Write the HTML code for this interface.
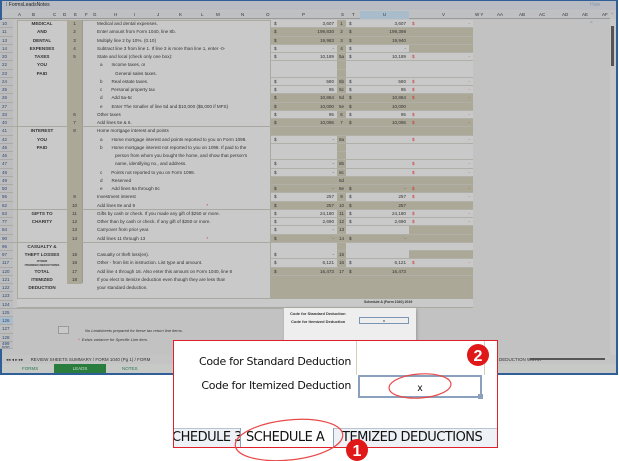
<!DOCTYPE html>
<html><head><meta charset="utf-8"><style>
*{margin:0;padding:0;box-sizing:border-box}
body{width:619px;height:461px;background:#fff;font-family:"Liberation Sans",sans-serif;position:relative;overflow:hidden}
.a{position:absolute}
.win{left:0;top:0;width:618px;height:375px;background:#c2c2c2;border:2px solid #2f5f96;border-top-width:1px}
.r{position:absolute;left:0;width:473px;height:8.25px;font-size:4.6px;color:#333;line-height:8.25px}
.r>div{position:absolute;top:0;height:8.25px;white-space:nowrap;overflow:hidden}
.n{left:0;width:13px;color:#2a4b7a;font-size:4.5px;padding-left:2px;background:#bdbdbd;border-bottom:1px solid #aaa}
.b{left:17px;width:50px;text-align:center;font-weight:bold}
.e{left:67px;width:15px;text-align:center;background:#aba898}
.h{left:97px}
.p{left:271px;width:66px;border-bottom:1px solid #b0b0a8;padding:0 3px;text-align:right}
.s{left:337px;width:9px;background:#aba898;text-align:center;border-bottom:1px solid #b0b0a8}
.u{left:346px;width:63px;padding:0 3px;text-align:right;border-bottom:1px solid #b0b0a8}
.v{left:409px;width:64px;padding:0 3px;border-bottom:1px solid #b0b0a8}
.w{background:#c9c9c9}.t{background:#aba898}
.d{float:left;color:#333}.rd{color:#c33}
.tab{font-size:4.5px;color:#333}
</style></head><body>
<div class="a win"></div>
<div class="a" style="left:2px;top:1px;width:614px;height:9px;background:#b9bcc2;font-size:5px;line-height:9px;padding-left:4px;color:#222">⁞ FormsLeadsNotes<span style="position:absolute;left:588px;color:#8895b0">Hide Changes ▪ ×</span></div>
<div class="a" style="left:2px;top:11px;width:608px;height:8px;background:#bfc0c2;border-bottom:1px solid #999;font-size:4.5px;line-height:8px;color:#333">
<span class="a" style="left:16px">A</span><span class="a" style="left:30px">B</span><span class="a" style="left:51px">C</span><span class="a" style="left:61px">D</span><span class="a" style="left:72px">E</span><span class="a" style="left:83px">F</span><span class="a" style="left:91px">G</span><span class="a" style="left:112px">H</span><span class="a" style="left:132px">I</span><span class="a" style="left:155px">J</span><span class="a" style="left:177px">K</span><span class="a" style="left:199px">L</span><span class="a" style="left:214px">M</span><span class="a" style="left:239px">N</span><span class="a" style="left:264px">O</span><span class="a" style="left:300px">P</span><span class="a" style="left:339px">S</span><span class="a" style="left:350px">T</span><span class="a" style="left:358px;width:49px;height:8px;background:#a9bccb;text-align:center">U</span><span class="a" style="left:440px">V</span><span class="a" style="left:473px">W Y</span><span class="a" style="left:495px">AA</span><span class="a" style="left:517px">AB</span><span class="a" style="left:537px">AC</span><span class="a" style="left:560px">AD</span><span class="a" style="left:580px">AE</span><span class="a" style="left:600px">AF</span></div>
<div class="a" style="left:610px;top:19px;width:6px;height:337px;background:#c8c8c8"></div>
<div class="a" style="left:611px;top:26px;width:3px;height:40px;background:#555"></div>
<!-- form box -->
<div class="a" style="left:17px;top:20px;width:254px;height:288px;background:#c9c9c9;border:1px solid #a9a9a0"></div>
<div class="a" style="left:271px;top:20px;width:202px;height:288px;background:#aba898"></div>
<div class="a" style="left:67px;top:20px;width:15px;height:263px;background:#aba898"></div>
<div class="a" style="left:82px;top:20px;width:1px;height:263px;background:#999"></div>
<div class="a" style="left:17px;top:298px;width:456px;height:10px;background:#c9c9c9;border-top:1px solid #a9a9a0;border-bottom:1px solid #a9a9a0"></div>
<div class="a" style="left:364px;top:300px;font-size:3.5px;font-weight:bold;color:#333">Schedule A (Form 1040) 2019</div>
<div class="a" style="left:13px;top:308px;width:270px;height:0;border-top:1px solid #aaa"></div>
<div class="a" style="left:58px;top:326px;width:11px;height:8px;border:1px solid #999;background:#c9c9c9"></div>
<div class="a" style="left:85px;top:328px;font-size:4px;font-style:italic;color:#333">No Leadsheets prepared for these tax return line items.</div>
<div class="a" style="left:78px;top:337px;font-size:4px;font-style:italic;color:#333"><span class="rd">*</span>&nbsp; Exists variance for Specific Line item.</div>
<!-- rows -->
<div class="r" style="top:20px"><div class="n">10</div><div class="b">MEDICAL</div><div class="e">1</div><div class="h">Medical and dental expenses.</div><div class="p w"><span class="d">$</span>3,607</div><div class="s">1</div><div class="u w"><span class="d">$</span>3,607</div><div class="v w"><span class="rd">$</span><span style="float:right" class="rd">-</span></div></div>
<div class="r" style="top:28.25px"><div class="n">11</div><div class="b">AND</div><div class="e">2</div><div class="h">Enter amount from Form 1040, line 8b.</div><div class="p t"><span class="d">$</span>199,830</div><div class="s">2</div><div class="u t"><span class="d">$</span>199,398</div><div class="v t"></div></div>
<div class="r" style="top:36.5px"><div class="n">13</div><div class="b">DENTAL</div><div class="e">3</div><div class="h">Multiply line 2 by 10%. (0.10)</div><div class="p t"><span class="d">$</span>19,983</div><div class="s">3</div><div class="u t"><span class="d">$</span>19,940</div><div class="v t"></div></div>
<div class="r" style="top:44.75px"><div class="n">14</div><div class="b">EXPENSES</div><div class="e">4</div><div class="h">Subtract line 3 from line 1. If line 3 is more than line 1, enter -0-</div><div class="p w"><span class="d">$</span>-</div><div class="s">4</div><div class="u w"><span class="d">$</span>-</div><div class="v t"></div></div>
<div class="r" style="top:53px"><div class="n">20</div><div class="b">TAXES</div><div class="e">5</div><div class="h">State and local (check only one box):</div><div class="p w"><span class="d">$</span>10,189</div><div class="s">5a</div><div class="u w"><span class="d">$</span>10,189</div><div class="v w"><span class="rd">$</span><span style="float:right" class="rd">-</span></div></div>
<div class="r" style="top:61.25px"><div class="n">22</div><div class="b">YOU</div><div class="e"></div><div class="h" style="left:100px">a &nbsp;&nbsp;&nbsp;&nbsp;&nbsp;&nbsp;Income taxes, or</div><div class="p w" style="border:0"></div><div class="s"></div><div class="u w" style="border:0"></div><div class="v w" style="border:0"></div></div>
<div class="r" style="top:69.5px"><div class="n">23</div><div class="b">PAID</div><div class="e"></div><div class="h" style="left:115px">General sales taxes.</div><div class="p w"></div><div class="s"></div><div class="u w"></div><div class="v w"></div></div>
<div class="r" style="top:77.75px"><div class="n">24</div><div class="e"></div><div class="h" style="left:100px">b &nbsp;&nbsp;&nbsp;&nbsp;&nbsp;&nbsp;Real estate taxes.</div><div class="p w"><span class="d">$</span>580</div><div class="s">5b</div><div class="u w"><span class="d">$</span>580</div><div class="v w"><span class="rd">$</span><span style="float:right" class="rd">-</span></div></div>
<div class="r" style="top:86px"><div class="n">25</div><div class="e"></div><div class="h" style="left:100px">c &nbsp;&nbsp;&nbsp;&nbsp;&nbsp;&nbsp;Personal property tax</div><div class="p w"><span class="d">$</span>95</div><div class="s">5c</div><div class="u w"><span class="d">$</span>95</div><div class="v w"><span class="rd">$</span><span style="float:right" class="rd">-</span></div></div>
<div class="r" style="top:94.25px"><div class="n">26</div><div class="e"></div><div class="h" style="left:100px">d &nbsp;&nbsp;&nbsp;&nbsp;&nbsp;&nbsp;Add 5a-5c</div><div class="p t"><span class="d">$</span>10,864</div><div class="s">5d</div><div class="u t"><span class="d">$</span>10,864</div><div class="v t"><span class="rd">$</span><span style="float:right" class="rd">-</span></div></div>
<div class="r" style="top:102.5px"><div class="n">27</div><div class="e"></div><div class="h" style="left:100px">e &nbsp;&nbsp;&nbsp;&nbsp;&nbsp;&nbsp;Enter The Smaller of line 5d and $10,000 ($5,000 if MFS)</div><div class="p t"><span class="d">$</span>10,000</div><div class="s">5e</div><div class="u t"><span class="d">$</span>10,000</div><div class="v t"></div></div>
<div class="r" style="top:110.75px"><div class="n">33</div><div class="e">6</div><div class="h">Other taxes</div><div class="p w"><span class="d">$</span>95</div><div class="s">6</div><div class="u w"><span class="d">$</span>95</div><div class="v w"><span class="rd">$</span><span style="float:right" class="rd">-</span></div></div>
<div class="r" style="top:119px;border-bottom:1px solid #a9a9a0"><div class="n">40</div><div class="e">7</div><div class="h">Add lines 5e &amp; 6.</div><div class="p t"><span class="d">$</span>10,095</div><div class="s">7</div><div class="u t"><span class="d">$</span>10,095</div><div class="v t"><span class="rd">$</span><span style="float:right" class="rd">-</span></div></div>
<div class="r" style="top:127.25px"><div class="n">41</div><div class="b">INTEREST</div><div class="e">8</div><div class="h">Home mortgage interest and points</div><div class="p t"></div><div class="s"></div><div class="u t"></div><div class="v t"></div></div>
<div class="r" style="top:135.5px"><div class="n">42</div><div class="b">YOU</div><div class="e"></div><div class="h" style="left:100px">a &nbsp;&nbsp;&nbsp;&nbsp;&nbsp;&nbsp;Home mortgage interest and points reported to you on Form 1098.</div><div class="p w"><span class="d">$</span>-</div><div class="s">8a</div><div class="u w"></div><div class="v w"><span class="rd">$</span><span style="float:right" class="rd">-</span></div></div>
<div class="r" style="top:143.75px"><div class="n">45</div><div class="b">PAID</div><div class="e"></div><div class="h" style="left:100px">b &nbsp;&nbsp;&nbsp;&nbsp;&nbsp;&nbsp;Home mortgage interest not reported to you on 1098. If paid to the</div><div class="p w" style="border:0"></div><div class="s"></div><div class="u w" style="border:0"></div><div class="v w" style="border:0"></div></div>
<div class="r" style="top:152px"><div class="n">46</div><div class="e"></div><div class="h" style="left:115px">person from whom you bought the home, and show that person's</div><div class="p w"></div><div class="s"></div><div class="u w"></div><div class="v w"></div></div>
<div class="r" style="top:160.25px"><div class="n">47</div><div class="e"></div><div class="h" style="left:115px">name, identifying no., and address.</div><div class="p w"><span class="d">$</span>-</div><div class="s">8b</div><div class="u w"></div><div class="v w"><span class="rd">$</span><span style="float:right" class="rd">-</span></div></div>
<div class="r" style="top:168.5px"><div class="n">48</div><div class="e"></div><div class="h" style="left:100px">c &nbsp;&nbsp;&nbsp;&nbsp;&nbsp;&nbsp;Points not reported to you on Form 1098.</div><div class="p w"><span class="d">$</span>-</div><div class="s">8c</div><div class="u w"></div><div class="v w"><span class="rd">$</span><span style="float:right" class="rd">-</span></div></div>
<div class="r" style="top:176.75px"><div class="n">49</div><div class="e"></div><div class="h" style="left:100px">d &nbsp;&nbsp;&nbsp;&nbsp;&nbsp;&nbsp;Reserved</div><div class="p t"></div><div class="s">8d</div><div class="u t"></div><div class="v t"></div></div>
<div class="r" style="top:185px"><div class="n">50</div><div class="e"></div><div class="h" style="left:100px">e &nbsp;&nbsp;&nbsp;&nbsp;&nbsp;&nbsp;Add lines 8a through 8c</div><div class="p t"><span class="d">$</span>-</div><div class="s">8e</div><div class="u t"><span class="d">$</span>-</div><div class="v t"><span class="rd">$</span><span style="float:right" class="rd">-</span></div></div>
<div class="r" style="top:193.25px"><div class="n">56</div><div class="e">9</div><div class="h">Investment interest</div><div class="p w"><span class="d">$</span>257</div><div class="s">9</div><div class="u w"><span class="d">$</span>257</div><div class="v w"><span class="rd">$</span><span style="float:right" class="rd">-</span></div></div>
<div class="r" style="top:201.5px;border-bottom:1px solid #a9a9a0"><div class="n">62</div><div class="e">10</div><div class="h">Add lines 8e and 9 <span class="rd" style="margin-left:70px">*</span></div><div class="p t"><span class="d">$</span>257</div><div class="s">10</div><div class="u t"><span class="d">$</span>257</div><div class="v t"></div></div>
<div class="r" style="top:209.75px"><div class="n">63</div><div class="b">GIFTS TO</div><div class="e">11</div><div class="h">Gifts by cash or check. If you made any gift of $250 or more.</div><div class="p w"><span class="d">$</span>24,180</div><div class="s">11</div><div class="u w"><span class="d">$</span>24,180</div><div class="v w"><span class="rd">$</span><span style="float:right" class="rd">-</span></div></div>
<div class="r" style="top:218px"><div class="n">77</div><div class="b">CHARITY</div><div class="e">12</div><div class="h">Other than by cash or check. If any gift of $250 or more.</div><div class="p w"><span class="d">$</span>2,690</div><div class="s">12</div><div class="u w"><span class="d">$</span>2,690</div><div class="v w"><span class="rd">$</span><span style="float:right" class="rd">-</span></div></div>
<div class="r" style="top:226.25px"><div class="n">84</div><div class="e">13</div><div class="h">Carryover from prior year.</div><div class="p w"><span class="d">$</span>-</div><div class="s">13</div><div class="u w"></div><div class="v t"></div></div>
<div class="r" style="top:234.5px;border-bottom:1px solid #a9a9a0"><div class="n">90</div><div class="e">14</div><div class="h">Add lines 11 through 13 <span class="rd" style="margin-left:60px">*</span></div><div class="p t"><span class="d">$</span>-</div><div class="s">14</div><div class="u t"><span class="d">$</span>-</div><div class="v t"></div></div>
<div class="r" style="top:242.75px"><div class="n">96</div><div class="b">CASUALTY &amp;</div><div class="e"></div><div class="h"></div><div class="p w" style="border:0"></div><div class="s"></div><div class="u w" style="border:0"></div><div class="v w"></div></div>
<div class="r" style="top:251px"><div class="n">97</div><div class="b">THEFT LOSSES</div><div class="e">15</div><div class="h">Casualty or theft loss(es).</div><div class="p w"><span class="d">$</span>-</div><div class="s">15</div><div class="u w"></div><div class="v t"></div></div>
<div class="r" style="top:259.25px"><div class="n">117</div><div class="b" style="font-size:3px;line-height:4px">OTHER<br>ITEMIZED DEDUCTIONS</div><div class="e">16</div><div class="h">Other - from list in instruction. List type and amount.</div><div class="p w"><span class="d">$</span>6,121</div><div class="s">16</div><div class="u w"><span class="d">$</span>6,121</div><div class="v w"><span class="rd">$</span><span style="float:right" class="rd">-</span></div></div>
<div class="r" style="top:267.5px"><div class="n">120</div><div class="b">TOTAL</div><div class="e">17</div><div class="h">Add line 4 through 16. Also enter this amount on Form 1040, line 8</div><div class="p t"><span class="d">$</span>16,473</div><div class="s">17</div><div class="u t"><span class="d">$</span>16,473</div><div class="v t"></div></div>
<div class="r" style="top:275.75px"><div class="n">121</div><div class="b">ITEMIZED</div><div class="e">18</div><div class="h">If you elect to itemize deduction even though they are less than</div></div>
<div class="r" style="top:284px"><div class="n">122</div><div class="b">DEDUCTION</div><div class="h">your standard deduction.</div></div>
<div class="r" style="top:292.25px"><div class="n">123</div></div>
<div class="r" style="top:300.5px"><div class="n">124</div></div>
<div class="r" style="top:308.75px"><div class="n">125</div></div>
<div class="r" style="top:317px"><div class="n" style="background:#a9bccb">126</div></div>
<div class="r" style="top:325.25px"><div class="n">127</div></div>
<div class="r" style="top:333.5px"><div class="n">128</div></div>
<div class="r" style="top:341.75px;height:7px"><div class="n" style="height:7px;line-height:4px">499<br>500</div></div>
<!-- small popup -->
<div class="a" style="left:284px;top:308px;width:132px;height:40px;background:#eeeeee;box-shadow:1px 1px 3px #999"></div>
<div class="a" style="left:290px;top:311px;font-size:4px;font-weight:bold;color:#333">Code for Standard Deduction</div>
<div class="a" style="left:291px;top:319px;font-size:4px;font-weight:bold;color:#333">Code for Itemized Deduction</div>
<div class="a" style="left:359px;top:317px;width:50px;height:7px;border:1px solid #7c95b5;font-size:4px;text-align:center;line-height:5px">x</div>
<!-- sheet tabs -->
<div class="a" style="left:2px;top:355px;width:614px;height:9px;background:#c4c4c4;font-size:4.5px;line-height:9px;color:#333;padding-left:4px">◂◂ ◂ ▸ ▸▸ <span style="margin-left:6px">REVIEW SHEETS SUMMARY</span> / FORM 1040 (Pg 1) / FORM<span class="a" style="left:497px">DEDUCTION WORK</span><span class="a" style="left:528px;top:3px;width:75px;height:2px;background:#555"></span></div>
<div class="a" style="left:2px;top:364px;width:614px;height:9px;background:#c7c9c7;font-size:4.5px;line-height:9px"><span class="a" style="left:20px;color:#2a7a4a">FORMS</span><span class="a" style="left:52px;width:52px;height:9px;background:#2a7d3f;color:#c9e0cc;text-align:center">LEADS</span><span class="a" style="left:120px;color:#2a7a4a">NOTES</span></div>
<!-- callout -->
<div class="a" style="left:173px;top:340px;width:325px;height:108px;background:#fff;border:1.5px solid #e0202a;overflow:hidden">
 <div class="a" style="left:182px;top:0;width:1px;height:34px;background:#d8d0b8"></div>
 <div class="a" style="left:310px;top:0;width:1px;height:34px;background:#d8d0b8"></div>
 <div class="a" style="left:0;top:14px;width:177px;text-align:right;font-size:11px;color:#111;font-family:'DejaVu Sans',sans-serif;letter-spacing:-0.3px">Code for Standard Deduction</div>
 <div class="a" style="left:0;top:38px;width:177px;text-align:right;font-size:11px;color:#111;font-family:'DejaVu Sans',sans-serif;letter-spacing:-0.3px">Code for Itemized Deduction</div>
 <div class="a" style="left:184px;top:34px;width:124px;height:23px;border:2px solid #8aa0bc;text-align:center;font-size:10px;line-height:23px">x</div>
 <div class="a" style="left:304px;top:53px;width:5px;height:5px;background:#8aa0bc"></div>
 <div class="a" style="left:0;top:87px;width:325px;height:21px;background:#eef2f6;border-top:1px solid #b8c4d2"></div>
 <div class="a" style="left:-2px;top:89px;font-size:13px;color:#111;font-family:'DejaVu Sans',sans-serif;letter-spacing:-0.5px">CHEDULE 3</div>
 <div class="a" style="left:66px;top:87px;width:94px;height:21px;background:#fff;border-left:1px solid #8aa0bc;border-right:1px solid #8aa0bc"></div>
 <div class="a" style="left:72px;top:89px;font-size:13px;color:#111;font-family:'DejaVu Sans',sans-serif;letter-spacing:-0.5px">SCHEDULE A</div>
 <div class="a" style="left:168px;top:89px;font-size:13px;color:#111;font-family:'DejaVu Sans',sans-serif;letter-spacing:-0.5px">TEMIZED DEDUCTIONS</div>
</div>
<svg class="a" style="left:0;top:0" width="619" height="461">
 <ellipse cx="420" cy="386" rx="31" ry="12" fill="none" stroke="#e84a4a" stroke-width="1.2" transform="rotate(-4 420 386)"/>
 <ellipse cx="289" cy="440" rx="54" ry="20" fill="none" stroke="#e84a4a" stroke-width="1.2" transform="rotate(-6 289 440)"/>
 <circle cx="478" cy="355" r="11" fill="#e01818"/>
 <text x="478" y="361" font-size="16" font-weight="bold" fill="#fff" text-anchor="middle" font-family="Liberation Sans,sans-serif">2</text>
 <circle cx="357" cy="450" r="11" fill="#e01818"/>
 <text x="357" y="456" font-size="16" font-weight="bold" fill="#fff" text-anchor="middle" font-family="Liberation Sans,sans-serif">1</text>
</svg>
</body></html>
